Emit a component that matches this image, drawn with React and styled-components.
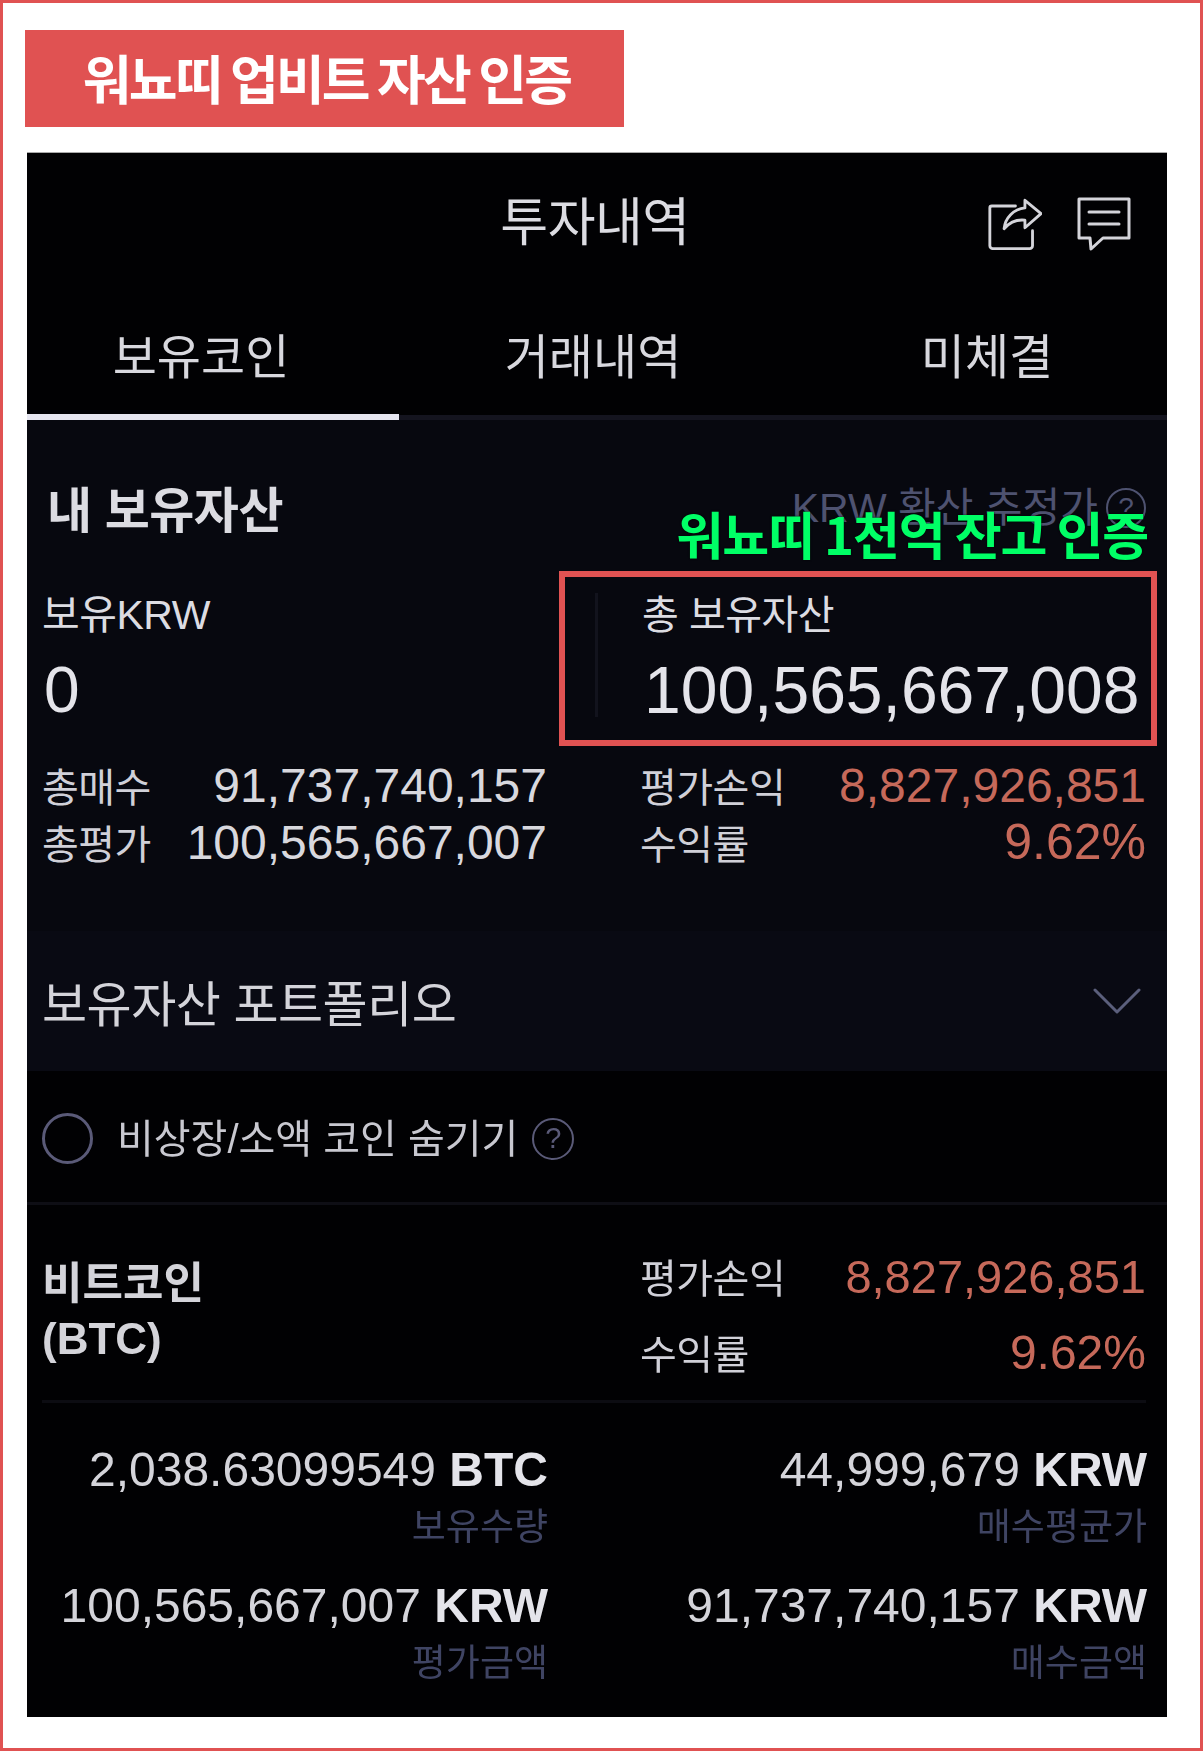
import React from 'react'
import styled, { createGlobalStyle } from 'styled-components'

const KR = `"Noto Sans CJK KR", "Liberation Sans", sans-serif`
const NUM = `"Liberation Sans", "Noto Sans CJK KR", sans-serif`

const GlobalStyle = createGlobalStyle`
  html, body { margin: 0; padding: 0; background: #fff; }
  * { box-sizing: border-box; }
`

const Page = styled.div`
  width: 1203px;
  height: 1751px;
  border: 3px solid #e05252;
  padding: 27px 0 0 22px;
  overflow: hidden;
`

const Banner = styled.h1`
  margin: 0;
  width: 599px;
  height: 97px;
  background: #e05252;
  color: #fff;
  font: 700 53px/94px ${KR};
  letter-spacing: -2.8px;
  text-indent: 4px;
  text-align: center;
`

const Panel = styled.div`
  position: relative;
  width: 1140px;
  height: 1565px;
  margin: 25px 0 0 2px;
  background: #010103;
  border-top: 1px solid #aaa;
  color: #dcdce2;
  font-family: ${NUM};
`

const Blurred = styled.div`
  filter: blur(0.7px);
`

const TitleBar = styled.div`
  position: relative;
  height: 134px;
  padding: 6px 4px 0 0;
  display: flex;
  align-items: center;
  justify-content: center;
  font-size: 52px;
  line-height: 1;
  letter-spacing: -0.5px;
`

const IconGroup = styled.div`
  position: absolute;
  right: 36px;
  top: 43px;
  display: flex;
  gap: 35px;
  color: #d4d4da;
`

const Tabs = styled.div`
  display: grid;
  grid-template-columns: 372px 388px 380px;
  height: 133px;
  border-bottom: 5px solid #14141f;
`

const Tab = styled.div`
  position: relative;
  display: flex;
  align-items: center;
  justify-content: center;
  font-size: 48px;
  line-height: 1;
  padding: ${p => p.$pad || '13px 0 0 0'};
  color: #d8d8de;

  ${p => p.$active && `
    &::after {
      content: '';
      position: absolute;
      left: 0;
      right: 0;
      bottom: -5px;
      height: 6px;
      background: #e6e6f0;
    }
  `}
`

const Assets = styled.section`
  height: 511px;
  background: #07080f;
  padding: 0 21px 0 15px;
`

const AssetHead = styled.div`
  display: flex;
  justify-content: space-between;
  align-items: center;
  height: 165px;
  padding-left: 5px;
  padding-top: 17px;
`

const AssetTitle = styled.h2`
  margin: 0;
  font: 700 49px/1 ${NUM};
  letter-spacing: -0.5px;
`

const Converted = styled.div`
  display: flex;
  align-items: center;
  gap: 8px;
  font-size: 41px;
  line-height: 1;
  color: #4e5270;
  margin-top: -6px;
`

const HelpMark = styled.span`
  display: inline-flex;
  align-items: center;
  justify-content: center;
  flex: none;
  width: ${p => p.$size}px;
  height: ${p => p.$size}px;
  border: 2px solid ${p => p.$color || '#4e5270'};
  border-radius: 50%;
  color: ${p => p.$color || '#4e5270'};
  font: 400 ${p => Math.round(p.$size * 0.7)}px/1 ${NUM};
`

const Columns = styled.div`
  display: grid;
  grid-template-columns: 505px 506px;
  column-gap: 93px;
`

const TotalCell = styled.div`
  position: relative;
  height: 172px;
`

const CellLabel = styled.div`
  font: 400 ${p => p.$size || 41}px/60px ${NUM};
  margin-left: ${p => p.$indent || 0}px;
  letter-spacing: -0.5px;
`

const CellValue = styled.div`
  font: 400 ${p => p.$size}px/76px ${NUM};
  margin-top: 7px;
  margin-left: ${p => p.$indent || 0}px;
  color: #e4e4ea;
  white-space: nowrap;
`

const ColumnRule = styled.span`
  position: absolute;
  left: -45px;
  top: 8px;
  width: 3px;
  height: 124px;
  background: #12131d;
`

const SummaryRow = styled.div`
  display: flex;
  justify-content: space-between;
  align-items: baseline;
  height: 57px;
  margin-top: ${p => p.$top || 0}px;
`

const RowLabel = styled.span`
  font: 400 40px/57px ${NUM};
  letter-spacing: -0.5px;
  color: #d0d0d8;
`

const RowValue = styled.span`
  font: 400 ${p => p.$size || 48}px/57px ${NUM};
  color: ${p => (p.$gain ? '#c6695a' : '#d8d8de')};
  white-space: nowrap;
`

const Portfolio = styled.section`
  display: flex;
  justify-content: space-between;
  align-items: center;
  height: 140px;
  background: #090a13;
  padding: 0 26px 0 15px;
  font-size: 49px;
  line-height: 1;
  color: #d4d4da;
  letter-spacing: -0.5px;
`

const PortfolioTitle = styled.span`
  padding-top: 8px;
`

const HideRow = styled.div`
  display: flex;
  align-items: center;
  height: 134px;
  padding: 4px 0 0 15px;
  border-bottom: 3px solid #0e0e15;
`

const RadioCircle = styled.span`
  flex: none;
  width: 51px;
  height: 51px;
  border: 3px solid #5a5a78;
  border-radius: 50%;
  margin-right: 24px;
`

const HideLabel = styled.span`
  font-size: 40px;
  line-height: 1;
  margin-right: 14px;
  color: #c8c8d0;
`

const CoinHead = styled.div`
  display: grid;
  grid-template-columns: 505px 506px;
  column-gap: 93px;
  height: 198px;
  margin: 0 21px 0 15px;
  padding-top: 43px;
  border-bottom: 3px solid #0c0c12;
`

const CoinName = styled.div`
  margin-top: 8px;
  font: 700 44px/55px ${NUM};
  color: #d4d4da;
`

const CoinDetail = styled.div`
  display: grid;
  grid-template-columns: 506px 506px;
  column-gap: 93px;
  row-gap: 24px;
  margin: 0 18px 0 15px;
  padding-top: 37px;
`

const Figure = styled.div`
  text-align: right;
`

const FigureValue = styled.div`
  font: 400 ${p => p.$size || 48}px/60px ${NUM};
  color: #d4d4da;
  white-space: nowrap;

  b { font-weight: 700; color: #e4e4ea; }
`

const FigureLabel = styled.div`
  margin-top: 4px;
  font: 400 37px/48px ${NUM};
  color: #3f4463;
`

const CertifyBox = styled.div`
  position: absolute;
  left: 532px;
  top: 418px;
  width: 598px;
  height: 175px;
  border: 6px solid #e05252;
`

const CertifyText = styled.div`
  position: absolute;
  right: 19px;
  top: 350px;
  font: 700 51px/60px ${KR};
  letter-spacing: -1.2px;
  color: #00ff66;
  white-space: nowrap;
  text-shadow: 0 0 2px #000;
`

const ShareIcon = () => (
  <svg width="55" height="56" viewBox="0 0 58 58" fill="none" stroke="currentColor" strokeWidth="3" strokeLinejoin="round" strokeLinecap="round">
    <path d="M30 10H5a2 2 0 0 0-2 2v40a3 3 0 0 0 3 3h39a3 3 0 0 0 3-3V36" />
    <path d="M40 4l17 14-17 15v-8c-9-1-16 2-22 9 1-11 10-21 22-22z" />
  </svg>
)

const ChatIcon = () => (
  <svg width="54" height="56" viewBox="0 0 54 56" fill="none" stroke="currentColor" strokeWidth="3" strokeLinejoin="round" strokeLinecap="round">
    <path d="M2 3h50v39H26L14 53l-1-11H2z" />
    <path d="M12 16h30M12 28h30" />
  </svg>
)

const Chevron = () => (
  <svg width="48" height="28" viewBox="0 0 48 28" fill="none" stroke="#5b5f7c" strokeWidth="3" strokeLinecap="round" strokeLinejoin="round">
    <path d="M2 3l22 22L46 3" />
  </svg>
)

const App = () => (
  <Page>
    <GlobalStyle />
    <Banner>워뇨띠 업비트 자산 인증</Banner>
    <Panel>
      <Blurred>
        <TitleBar>
          투자내역
          <IconGroup>
            <ShareIcon />
            <ChatIcon />
          </IconGroup>
        </TitleBar>
        <Tabs>
          <Tab $active $pad="13px 24px 0 0">보유코인</Tab>
          <Tab>거래내역</Tab>
          <Tab $pad="13px 0 0 20px">미체결</Tab>
        </Tabs>
        <Assets>
          <AssetHead>
            <AssetTitle>내 보유자산</AssetTitle>
            <Converted>KRW 환산 추정가 <HelpMark $size={40}>?</HelpMark></Converted>
          </AssetHead>
          <Columns>
            <TotalCell>
              <CellLabel>보유KRW</CellLabel>
              <CellValue $size={64} $indent={2}>0</CellValue>
            </TotalCell>
            <TotalCell>
              <ColumnRule />
              <CellLabel $indent={2} $size={40}>총 보유자산</CellLabel>
              <CellValue $size={66} $indent={4}>100,565,667,008</CellValue>
            </TotalCell>
            <div>
              <SummaryRow><RowLabel>총매수</RowLabel><RowValue>91,737,740,157</RowValue></SummaryRow>
              <SummaryRow><RowLabel>총평가</RowLabel><RowValue>100,565,667,007</RowValue></SummaryRow>
            </div>
            <div>
              <SummaryRow><RowLabel>평가손익</RowLabel><RowValue $gain>8,827,926,851</RowValue></SummaryRow>
              <SummaryRow><RowLabel>수익률</RowLabel><RowValue $gain $size={50}>9.62%</RowValue></SummaryRow>
            </div>
          </Columns>
        </Assets>
        <Portfolio>
          <PortfolioTitle>보유자산 포트폴리오</PortfolioTitle>
          <Chevron />
        </Portfolio>
        <HideRow>
          <RadioCircle />
          <HideLabel>비상장/소액 코인 숨기기</HideLabel>
          <HelpMark $size={42} $color="#5a5a78">?</HelpMark>
        </HideRow>
        <CoinHead>
          <CoinName>비트코인<br />(BTC)</CoinName>
          <div>
            <SummaryRow><RowLabel>평가손익</RowLabel><RowValue $gain $size={47}>8,827,926,851</RowValue></SummaryRow>
            <SummaryRow $top={19}><RowLabel>수익률</RowLabel><RowValue $gain $size={48}>9.62%</RowValue></SummaryRow>
          </div>
        </CoinHead>
        <CoinDetail>
          <Figure>
            <FigureValue>2,038.63099549 <b>BTC</b></FigureValue>
            <FigureLabel>보유수량</FigureLabel>
          </Figure>
          <Figure>
            <FigureValue>44,999,679 <b>KRW</b></FigureValue>
            <FigureLabel>매수평균가</FigureLabel>
          </Figure>
          <Figure>
            <FigureValue>100,565,667,007 <b>KRW</b></FigureValue>
            <FigureLabel>평가금액</FigureLabel>
          </Figure>
          <Figure>
            <FigureValue>91,737,740,157 <b>KRW</b></FigureValue>
            <FigureLabel>매수금액</FigureLabel>
          </Figure>
        </CoinDetail>
      </Blurred>
      <CertifyText>워뇨띠 1천억 잔고 인증</CertifyText>
      <CertifyBox />
    </Panel>
  </Page>
)

export default App
